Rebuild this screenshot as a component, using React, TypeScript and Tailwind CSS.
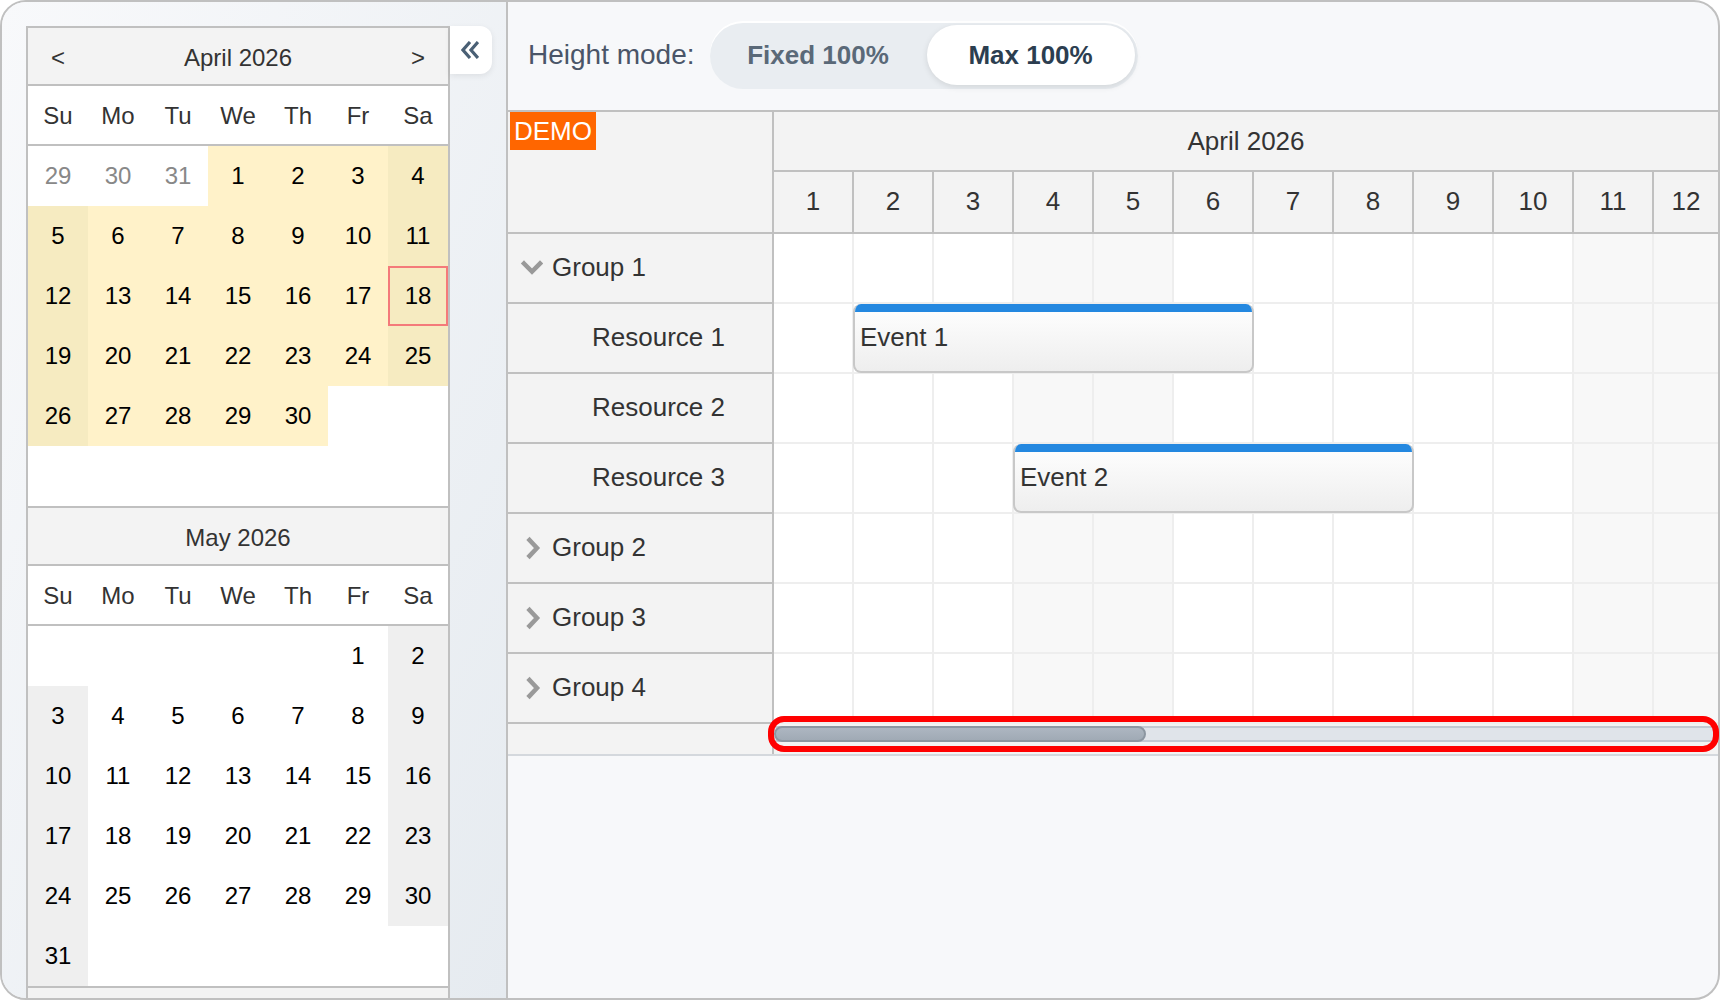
const FONT = "font-['Liberation_Sans',Arial,sans-serif]";
const april = [29, 30, 31, 1, 2, 3, 4, 5, 6, 7, 8, 9, 10, 11, 12, 13, 14, 15, 16, 17, 18, 19, 20, 21, 22, 23, 24, 25, 26, 27, 28, 29, 30];
const dows = ["Su", "Mo", "Tu", "We", "Th", "Fr", "Sa"];

function NavCell({ value, tone, selected }: { value?: number; tone: string; selected?: boolean }) {
  return (
    <div className={`relative h-[60px] flex items-center justify-center text-[24px] ${tone}`}>
      {value}
      {selected && <div className="absolute inset-0 border-2 border-[#f47a7a]" />}
    </div>
  );
}

function MonthHead({ title, arrows }: { title: string; arrows?: boolean }) {
  return (
    <>
      <div className="h-[58px] border-b-2 border-[#c0c0c0] bg-[#f3f3f3] flex items-center pt-[4px] text-[24px] text-[#333]">
        <div className="w-[60px] text-center">{arrows && "<"}</div>
        <div className="flex-1 text-center">{title}</div>
        <div className="w-[60px] text-center">{arrows && ">"}</div>
      </div>
      <div className="h-[60px] border-b-2 border-[#c0c0c0] bg-white grid grid-cols-7 text-[24px] text-[#333]">
        {dows.map((d) => (
          <div key={d} className="flex items-center justify-center pt-[2px]">{d}</div>
        ))}
      </div>
    </>
  );
}

function Navigator() {
  return (
    <div className="w-[424px] h-[1000px] shrink-0 border-x-2 border-t-2 border-[#c0c0c0]">
      <MonthHead title="April 2026" arrows />
      <div className="grid grid-cols-7 auto-rows-[60px] content-start h-[360px] bg-white">
        {april.map((d, i) => {
          const other = i < 3;
          const weekend = i % 7 === 0 || i % 7 === 6;
          const tone = other ? "bg-white text-[#888]" : weekend ? "bg-[#f6ebc1] text-black" : "bg-[#fff2c9] text-black";
          return <NavCell key={i} value={d} tone={tone} selected={!other && d === 18} />;
        })}
      </div>
      <div className="border-t-2 border-[#c0c0c0]">
        <MonthHead title="May 2026" />
      </div>
      <div className="grid grid-cols-7 auto-rows-[60px] content-start h-[360px] bg-white">
        {Array.from({ length: 36 }, (_, i) => {
          const d = i - 4;
          const weekend = i % 7 === 0 || i % 7 === 6;
          if (d < 1) return <NavCell key={i} tone="bg-white" />;
          return <NavCell key={i} value={d} tone={weekend ? "bg-[#efefef] text-black" : "bg-white text-black"} />;
        })}
      </div>
      <div className="border-t-2 border-[#c0c0c0] h-[60px] bg-[#f3f3f3]" />
    </div>
  );
}

function Chevron({ open }: { open: boolean }) {
  return (
    <svg width="24" height="24" viewBox="0 0 24 24" fill="none" stroke="#999999" strokeWidth="4.5" strokeLinecap="square">
      {open ? <path d="M5 7.5 L13 15.5 L21 7.5" /> : <path d="M10.5 4 L18 12 L10.5 20" />}
    </svg>
  );
}

const rows = [
  { label: "Group 1", kind: "open" },
  { label: "Resource 1", kind: "res", event: { name: "Event 1", left: "left-[79px]" } },
  { label: "Resource 2", kind: "res" },
  { label: "Resource 3", kind: "res", event: { name: "Event 2", left: "left-[239px]" } },
  { label: "Group 2", kind: "closed" },
  { label: "Group 3", kind: "closed" },
  { label: "Group 4", kind: "closed" },
];

const days = Array.from({ length: 12 }, (_, i) => i + 1);

function Scheduler() {
  return (
    <div className="flex flex-col">
      <div className="flex h-[122px] border-b-2 border-[#c0c0c0] bg-[#f3f3f3] text-[#333] text-[26px]">
        <div className="relative w-[266px] shrink-0 border-r-2 border-[#c0c0c0]">
          <div className="absolute left-[2px] top-0 h-[38px] w-[86px] bg-[#ff6600] text-white text-[26px] flex items-center justify-center">DEMO</div>
        </div>
        <div className="flex-1 flex flex-col min-w-0">
          <div className="h-[60px] border-b-2 border-[#c0c0c0] flex items-center justify-center">April 2026</div>
          <div className="flex-1 flex">
            {days.map((d) => (
              <div key={d} className={`flex items-center justify-center pb-[1px] ${d === 12 ? "flex-1" : "w-[80px] shrink-0 border-r-2 border-[#c0c0c0]"}`}>{d}</div>
            ))}
          </div>
        </div>
      </div>
      {rows.map((r) => (
        <div key={r.label} className="flex h-[70px]">
          <div className="w-[266px] shrink-0 border-r-2 border-b-2 border-[#c0c0c0] bg-[#f3f3f3] flex items-center pb-[1px] text-[26px] text-[#333]">
            {r.kind === "res" ? (
              <span className="pl-[84px]">{r.label}</span>
            ) : (
              <>
                <span className="w-[44px] flex justify-center pl-[1px]">
                  <Chevron open={r.kind === "open"} />
                </span>
                {r.label}
              </>
            )}
          </div>
          <div className="relative flex-1 flex min-w-0">
            {days.map((d) => (
              <div
                key={d}
                className={`border-b-2 border-[#eeeeee] ${d === 12 ? "flex-1" : "w-[80px] shrink-0 border-r-2"} ${[4, 5, 11, 12].includes(d) ? "bg-[#f8f8f8]" : "bg-white"}`}
              />
            ))}
            {r.event && (
              <div className={`absolute top-0 ${r.event.left} w-[401px] h-[69px] rounded-[8px] border-2 border-[#c8c8c8] border-t-0 bg-gradient-to-b from-white to-[#eeeeee] overflow-hidden`}>
                <div className="h-[8px] bg-[#2488e0] -mx-[2px]" />
                <div className="h-[51px] flex items-center pl-[5px] text-[26px] text-[#333]">{r.event.name}</div>
              </div>
            )}
          </div>
        </div>
      ))}
      <div className="flex h-[32px] border-b-2 border-[#d4d8dd]">
        <div className="w-[266px] shrink-0 border-r-2 border-[#c0c0c0] bg-[#f3f3f3]" />
        <div className="flex-1 bg-[#f3f3f3] pt-[2px] min-w-0">
          <div className="h-[16px] bg-[#e0e4ea] border-y-2 border-[#c2c9d2]">
            <div className="h-[16px] -mt-[2px] w-[372px] rounded-[8px] bg-gradient-to-b from-[#adb6c1] to-[#a0aab5] border-2 border-[#8c96a1]" />
          </div>
        </div>
      </div>
    </div>
  );
}

export default function App() {
  return (
    <div className={`relative w-[1720px] h-[1000px] ${FONT}`}>
      <div className="w-full h-full border-2 border-[#c0c0c0] rounded-[26px] overflow-hidden flex bg-[#f7f8fa]">
        <aside className="w-[504px] shrink-0 overflow-hidden pl-[24px] pt-[24px] flex items-start bg-gradient-to-br from-[#f8f9fb] to-[#e6ebf0]">
          <Navigator />
          <button className="w-[42px] h-[48px] pr-[3px] bg-white rounded-r-[12px] shadow-[0_2px_6px_rgba(0,0,0,0.08)] flex items-center justify-center text-[#4a6075]">
            <svg width="18" height="18" viewBox="0 0 18 18" fill="none" stroke="currentColor" strokeWidth="3.2">
              <path d="M9 1 L2 9 L9 17" />
              <path d="M17 1 L10 9 L17 17" />
            </svg>
          </button>
        </aside>
        <main className="flex-1 min-w-0 border-l-2 border-[#c0c0c0]">
          <div className="h-[110px] border-b-2 border-[#c0c0c0] flex items-center pl-[20px] pb-[2px] gap-[15px]">
            <span className="text-[28px] text-[#4a5568]">Height mode:</span>
            <div className="mt-[2px] w-[428px] h-[66px] rounded-[33px] bg-[#e9edf1] shadow-[0_-2px_0_#ffffff] flex items-center pr-[3px] pb-[2px]">
              <div className="w-[217px] text-center text-[26px] font-bold text-[#5a6978]">Fixed 100%</div>
              <div className="w-[208px] h-[60px] rounded-[30px] bg-white shadow-[0_2px_6px_rgba(0,0,0,0.1)] flex items-center justify-center text-[26px] font-bold text-[#2c3e50]">Max 100%</div>
            </div>
          </div>
          <Scheduler />
        </main>
      </div>
      <div className="absolute left-[768px] top-[716px] w-[951px] h-[36px] rounded-[16px] border-[6px] border-[#ff0000]" />
    </div>
  );
}
